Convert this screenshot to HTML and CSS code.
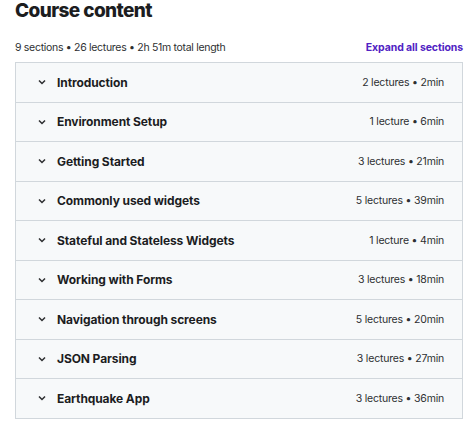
FILE: index.html
```html
<!DOCTYPE html>
<html>
<head>
<meta charset="utf-8">
<link rel="stylesheet" href="styles.css">
</head>
<body>
<div class="page">
  <h2 class="title">Course content</h2>
  <div class="summary">
    <span class="meta">9 sections • 26 lectures • 2h 51m total length</span>
    <span class="expand">Expand all sections</span>
  </div>
  <div class="sections">
    <div class="row"><span class="chev"><svg viewBox="0 0 10 10"><path d="M2.5 3.8 L5 6.2 L7.5 3.8"/></svg></span><span class="name">Introduction</span><span class="info">2 lectures • 2min</span></div>
    <div class="row"><span class="chev"><svg viewBox="0 0 10 10"><path d="M2.5 3.8 L5 6.2 L7.5 3.8"/></svg></span><span class="name">Environment Setup</span><span class="info">1 lecture • 6min</span></div>
    <div class="row"><span class="chev"><svg viewBox="0 0 10 10"><path d="M2.5 3.8 L5 6.2 L7.5 3.8"/></svg></span><span class="name">Getting Started</span><span class="info">3 lectures • 21min</span></div>
    <div class="row"><span class="chev"><svg viewBox="0 0 10 10"><path d="M2.5 3.8 L5 6.2 L7.5 3.8"/></svg></span><span class="name">Commonly used widgets</span><span class="info">5 lectures • 39min</span></div>
    <div class="row"><span class="chev"><svg viewBox="0 0 10 10"><path d="M2.5 3.8 L5 6.2 L7.5 3.8"/></svg></span><span class="name">Stateful and Stateless Widgets</span><span class="info">1 lecture • 4min</span></div>
    <div class="row"><span class="chev"><svg viewBox="0 0 10 10"><path d="M2.5 3.8 L5 6.2 L7.5 3.8"/></svg></span><span class="name">Working with Forms</span><span class="info">3 lectures • 18min</span></div>
    <div class="row"><span class="chev"><svg viewBox="0 0 10 10"><path d="M2.5 3.8 L5 6.2 L7.5 3.8"/></svg></span><span class="name">Navigation through screens</span><span class="info">5 lectures • 20min</span></div>
    <div class="row"><span class="chev"><svg viewBox="0 0 10 10"><path d="M2.5 3.8 L5 6.2 L7.5 3.8"/></svg></span><span class="name">JSON Parsing</span><span class="info">3 lectures • 27min</span></div>
    <div class="row"><span class="chev"><svg viewBox="0 0 10 10"><path d="M2.5 3.8 L5 6.2 L7.5 3.8"/></svg></span><span class="name">Earthquake App</span><span class="info">3 lectures • 36min</span></div>
  </div>
</div>
</body>
</html>
```
FILE: styles.css
```css
html, body {
  margin: 0;
  padding: 0;
  background: #ffffff;
}
body {
  font-family: "Inter", "Roboto", "Liberation Sans", sans-serif;
  color: #1c1d1f;
}
.page {
  width: 448px;
  padding: 0 12px 0 15px;
}
.title {
  margin: 0;
  padding-top: 0;
  font-size: 19px;
  font-weight: 800;
  line-height: 22px;
  letter-spacing: -0.6px;
}
.summary {
  display: flex;
  justify-content: space-between;
  align-items: center;
  margin-top: 17px;
  height: 16px;
  font-size: 10.5px;
}
.meta {
  color: #2d2f31;
  letter-spacing: -0.3px;
}
.expand {
  color: #5022c3;
  font-weight: 700;
  letter-spacing: -0.1px;
}
.sections {
  margin-top: 7px;
  border: 1px solid #d1d7dc;
  border-bottom: none;
}
.row {
  display: flex;
  align-items: center;
  height: 38.5px;
  background: #f7f9fa;
  border-bottom: 1px solid #d1d7dc;
  padding: 0 18px 0 20px;
}
.chev {
  width: 12px;
  height: 12px;
  margin-right: 9px;
  display: flex;
}
.chev svg {
  width: 12px;
  height: 12px;
  fill: none;
  stroke: #2d2f31;
  stroke-width: 1.3;
}
.name {
  flex: 1;
  font-size: 12px;
  font-weight: 700;
  letter-spacing: -0.1px;
}
.info {
  font-size: 10.5px;
  color: #2d2f31;
  letter-spacing: -0.2px;
}
```
